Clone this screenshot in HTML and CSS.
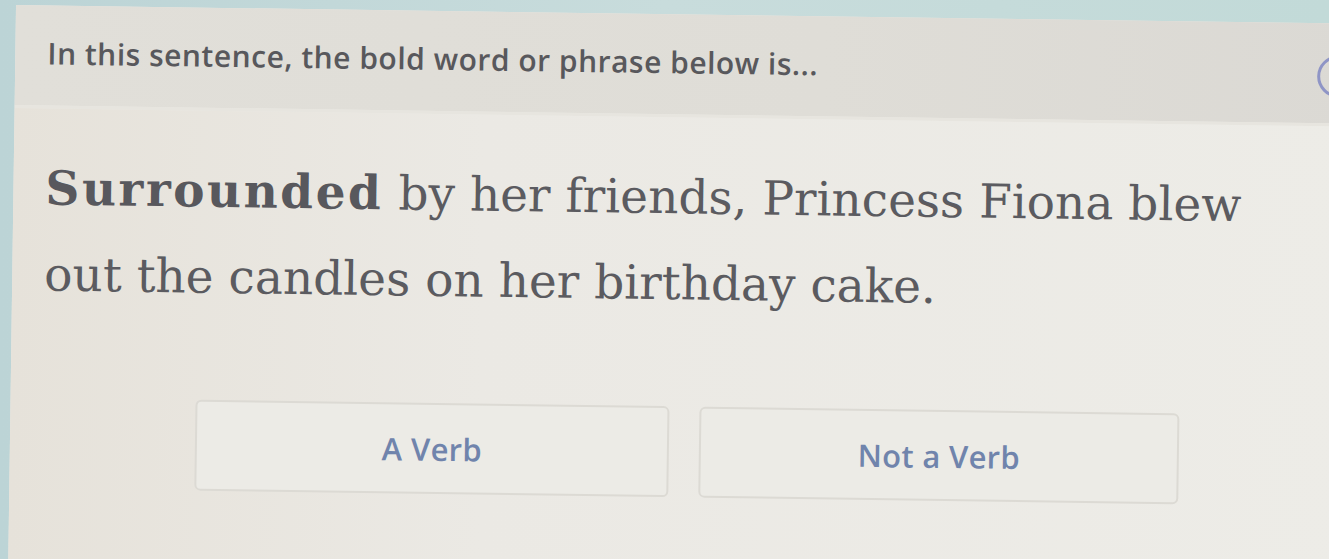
FILE: index.html
```html
<!DOCTYPE html>
<html>
<head>
<meta charset="utf-8">
<link rel="stylesheet" href="styles.css">
</head>
<body>
<div class="screen">
  <div class="header">
    <div class="prompt">In this sentence, the bold word or phrase below is...</div>
    <div class="circle-btn"></div>
  </div>
  <div class="main">
    <p class="sentence"><b>Surrounded</b> by her friends, Princess Fiona blew out the candles on her birthday cake.</p>
    <div class="choices">
      <div class="choice choice-a">A Verb</div>
      <div class="choice choice-b">Not a Verb</div>
    </div>
  </div>
</div>
</body>
</html>
```
FILE: styles.css
```css
html, body {
  margin: 0;
  padding: 0;
  height: 100%;
}
body {
  background: linear-gradient(90deg, #bcd4d6 0%, #c8dcdc 50%, #c2dad8 100%);
  overflow: hidden;
}
.screen {
  margin-left: 12px;
  margin-top: 5px;
  width: 1345px;
  height: 554px;
  display: flex;
  flex-direction: column;
  background: #eae9e4;
  transform: rotate(0.8deg);
  transform-origin: 0 290px;
}
.header {
  height: 100px;
  flex: none;
  background: linear-gradient(90deg, #e1dfd9 0%, #dfddd7 60%, #dbd9d4 100%);
  display: flex;
  align-items: center;
  justify-content: space-between;
  padding-left: 32px;
  overflow: hidden;
  border-bottom: 3px solid #e7e5df;
}
.prompt {
  font-family: "Open Sans", sans-serif;
  font-size: 30px;
  font-weight: 600;
  letter-spacing: 0.5px;
  color: #58585c;
  margin-top: -5px;
}
.circle-btn {
  width: 36px;
  height: 36px;
  border: 3px solid #8f95c6;
  border-radius: 50%;
  margin-right: 1px;
  margin-top: 5px;
  flex: none;
}
.main {
  flex: 1;
  padding-left: 32px;
  background: linear-gradient(90deg, #e6e2da 0%, #ebe9e4 35%, #edece7 100%);
}
.sentence {
  font-family: "DejaVu Serif", serif;
  font-size: 47px;
  line-height: 86px;
  color: #5b5b60;
  margin: 37px 0 0 0;
  width: 1250px;
}
.sentence b {
  font-weight: bold;
  letter-spacing: 2.5px;
  color: #58585d;
}
.choices {
  display: flex;
  align-items: flex-start;
  gap: 30px;
  margin-left: 153px;
  margin-top: 80px;
}
.choice {
  height: 91px;
  box-sizing: border-box;
  border: 2px solid #dcdad4;
  border-radius: 6px;
  background: #ecebe6;
  display: flex;
  align-items: center;
  justify-content: center;
  font-family: "Open Sans", sans-serif;
  font-size: 31px;
  font-weight: 600;
  letter-spacing: 0.3px;
  color: #7084ac;
}
.choice-a {
  width: 474px;
}
.choice-b {
  width: 480px;
}
```
